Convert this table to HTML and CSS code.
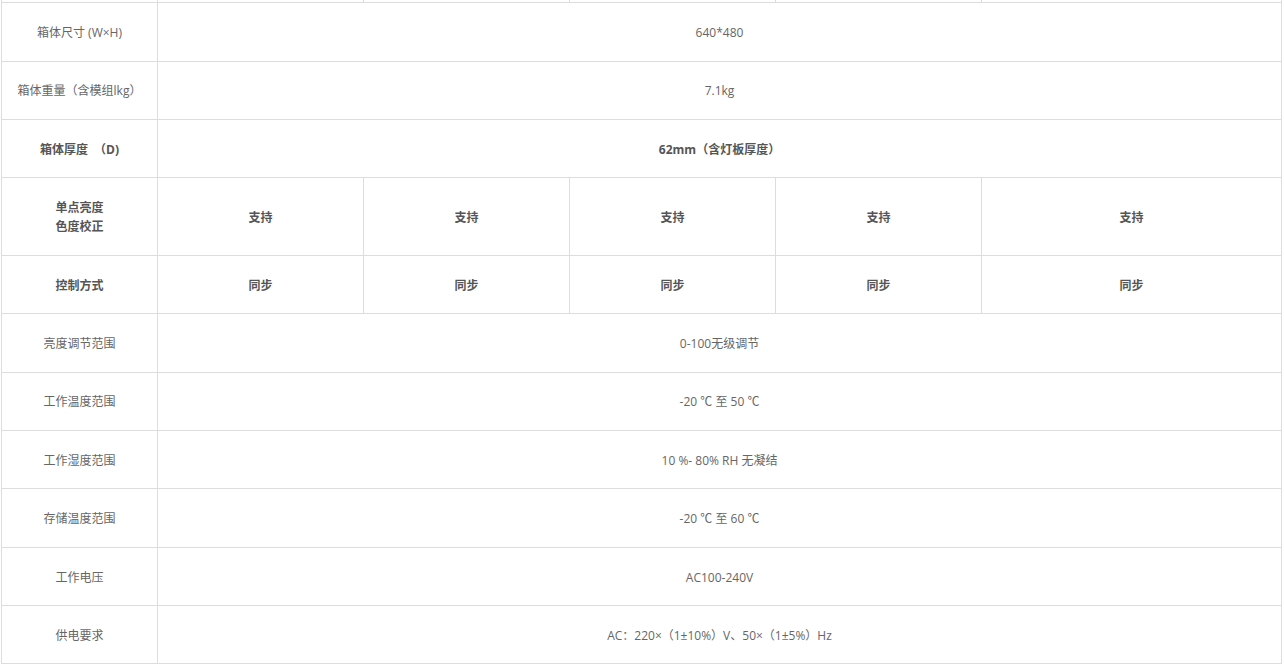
FILE: index.html
```html
<!DOCTYPE html>
<html lang="zh-CN">
<head>
  <meta charset="UTF-8">
  <title>产品参数</title>
  <meta name="viewport" content="width=device-width,initial-scale=1">
  <link rel="stylesheet" href="styles.css">
</head>
<body>
  <div class="spec-wrap">
    <table class="spec">
      <colgroup>
        <col class="c-name">
        <col class="c-val">
        <col class="c-val">
        <col class="c-val">
        <col class="c-val">
        <col class="c-last">
      </colgroup>
      <tbody>
        <tr class="cut">
          <td></td>
          <td></td>
          <td></td>
          <td></td>
          <td></td>
          <td></td>
        </tr>
        <tr>
          <td>箱体尺寸 (W×H)</td>
          <td colspan="5">640*480</td>
        </tr>
        <tr>
          <td>箱体重量（含模组lkg）</td>
          <td colspan="5">7.1kg</td>
        </tr>
        <tr class="strong">
          <td>箱体厚度　（D)</td>
          <td colspan="5">62mm（含灯板厚度）</td>
        </tr>
        <tr class="strong">
          <td>单点亮度<br>色度校正</td>
          <td>支持</td>
          <td>支持</td>
          <td>支持</td>
          <td>支持</td>
          <td>支持</td>
        </tr>
        <tr class="strong">
          <td>控制方式</td>
          <td>同步</td>
          <td>同步</td>
          <td>同步</td>
          <td>同步</td>
          <td>同步</td>
        </tr>
        <tr>
          <td>亮度调节范围</td>
          <td colspan="5">0-100无级调节</td>
        </tr>
        <tr>
          <td>工作温度范围</td>
          <td colspan="5">-20 ℃ 至 50 ℃</td>
        </tr>
        <tr>
          <td>工作湿度范围</td>
          <td colspan="5">10 %- 80% RH 无凝结</td>
        </tr>
        <tr>
          <td>存储温度范围</td>
          <td colspan="5">-20 ℃ 至 60 ℃</td>
        </tr>
        <tr>
          <td>工作电压</td>
          <td colspan="5">AC100-240V</td>
        </tr>
        <tr>
          <td>供电要求</td>
          <td colspan="5">AC：220×（1±10%）V、50×（1±5%）Hz</td>
        </tr>
      </tbody>
    </table>
  </div>
</body>
</html>
```

FILE: styles.css
```css
body { font-family: "Open Sans", "Noto Sans CJK SC", sans-serif; background: #fff; margin: 0; padding: 0; }
.spec-wrap { overflow: hidden; height: 667px; padding-left: 1px; }
.spec { width: 1280px; border-collapse: collapse; table-layout: fixed; margin-top: -56px; font-size: 12px; line-height: 19px; color: #666; }
.spec td { border: 1px solid #ddd; padding: 19.8px 8px 18.6px; text-align: center; vertical-align: middle; }
.spec .cut td { height: 57.2px; padding: 0; }
.c-name { width: 156px; }
.c-val { width: 206px; }
.c-last { width: 300px; }
.strong td { font-weight: bold; color: #555; }
```
